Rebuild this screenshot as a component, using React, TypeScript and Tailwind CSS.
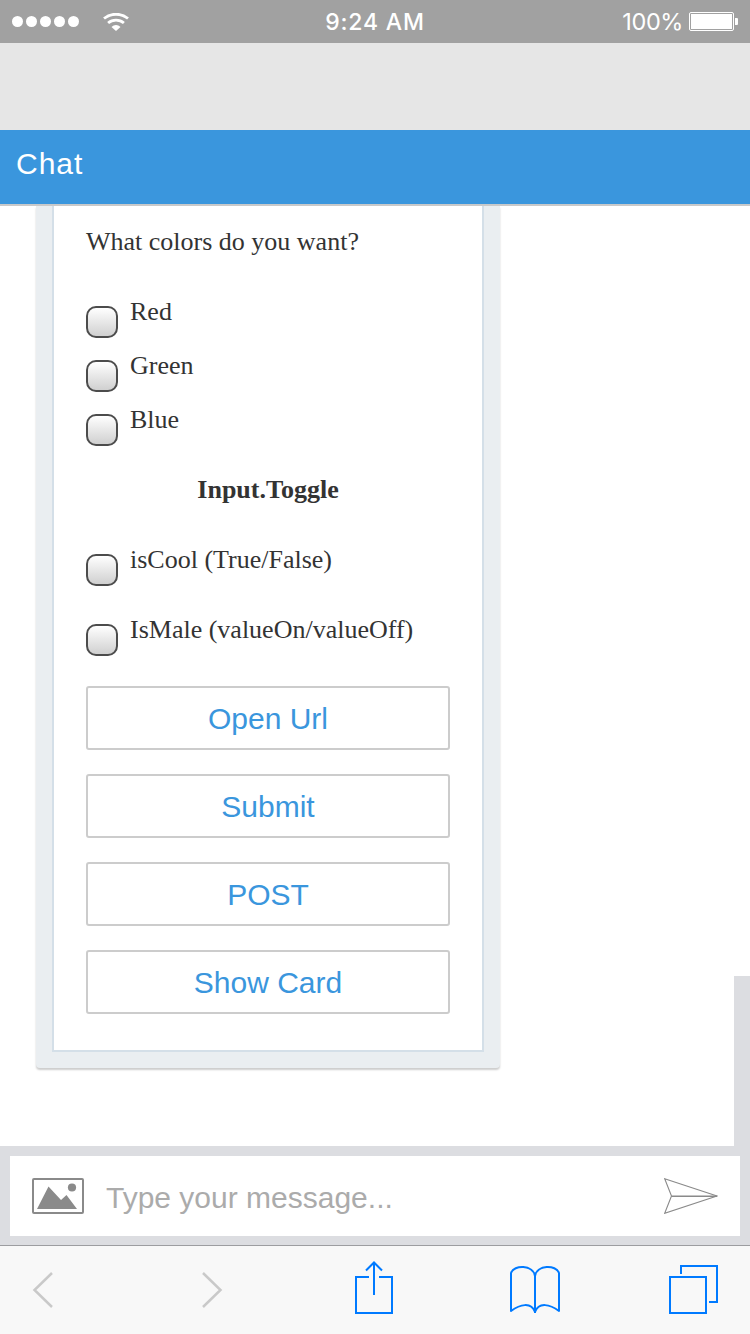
const colors = ["Red", "Green", "Blue"];
const actions = ["Open Url", "Submit", "POST", "Show Card"];

function CheckRow({ label }: { label: string }) {
  return (
    <label className="flex h-[42px] items-start gap-3">
      <span className="mt-[9px] size-8 shrink-0 rounded-[10px] border-2 border-[#4c4c4c] bg-linear-to-b from-white to-[#d0d0d0]" />
      <span className="whitespace-nowrap">{label}</span>
    </label>
  );
}

function StatusBar() {
  return (
    <header className="flex h-[43px] shrink-0 items-center bg-[#a1a1a1] text-white">
      <div className="flex w-[250px] items-center pl-3">
        <div className="flex gap-[3px]">
          {[0, 1, 2, 3, 4].map((i) => (
            <span key={i} className="size-[11px] rounded-full bg-white" />
          ))}
        </div>
        <svg className="ml-6 h-[18px] w-[26px]" viewBox="0 0 26 18" fill="none" stroke="white">
          <path d="M1 5.5C7.7-0.2 18.3-0.2 25 5.500" strokeWidth="2.8" />
          <path d="M5.1 10C9.5 6.1 16.5 6.1 20.9 10" strokeWidth="2.8" />
          <path d="M8.500 14C11 11.2 15 11.2 17.500 14L13 18Z" fill="white" stroke="none" />
        </svg>
      </div>
      <div className="w-[250px] pt-[2px] text-center font-['Inter',sans-serif] text-[23px] font-medium tracking-[0.8px]">9:24 AM</div>
      <div className="flex w-[250px] items-center justify-end pr-3">
        <span className="font-['Inter',sans-serif] text-[23.5px] tracking-[-0.4px]">100%</span>
        <svg className="ml-[6px] h-[19px] w-[49px]" viewBox="0 0 49 19">
          <rect x="0.5" y="0.5" width="44" height="18" rx="1.5" fill="none" stroke="white" />
          <rect x="2" y="2" width="41" height="15" fill="white" />
          <path d="M46 6h2q1 0 1 1v5q0 1-1 1h-2z" fill="white" />
        </svg>
      </div>
    </header>
  );
}

function Composer() {
  return (
    <div className="h-[99px] shrink-0 bg-[#dcdde1] px-[10px] pt-[10px]">
      <div className="flex h-20 items-center bg-white pr-[22px] pl-[22px]">
        <svg className="h-9 w-[52px]" viewBox="0 0 52 36">
          <rect x="1" y="1" width="50" height="34" rx="1" fill="none" stroke="#8a8a8a" strokeWidth="2" />
          <path d="M5 31L16.5 8.5L29 22L34.5 17L45 31Z" fill="#8a8a8a" />
          <circle cx="40" cy="9.5" r="4.1" fill="#8a8a8a" />
        </svg>
        <span className="ml-[22px] pt-[3px] text-[30px] text-[#ababab]">Type your message...</span>
        <svg className="ml-auto h-9 w-[54px]" viewBox="0 0 54 36" fill="none" stroke="#8a8a8a" strokeWidth="1.1">
          <path d="M0.7 0.7L53 18L0.7 35.3L7.5 18Z" />
          <path d="M7.5 18.2H53" strokeWidth="1.5" />
        </svg>
      </div>
    </div>
  );
}

function BrowserBar() {
  return (
    <nav className="h-[89px] shrink-0 border-t border-[#9c9da0] bg-[#f8f8f8]">
      <svg className="block h-[88px] w-[750px]" viewBox="0 1246 750 88" fill="none" stroke="#007aff" strokeWidth="2">
        <path d="M52 1273L34.5 1290L52 1307" stroke="#c9c9c9" strokeWidth="2.5" />
        <path d="M203 1273L220.500 1290L203 1307" stroke="#c9c9c9" strokeWidth="2.5" />
        <path d="M369 1277H356V1313H392V1277H379M374 1295V1263M366 1270.500L374 1262.500L382 1270.500" />
        <path d="M535 1313V1276C533 1264.500 514 1264.500 511 1273V1311C520 1304.500 531 1301.500 535 1312C539 1301.500 550 1304.500 559 1311V1273C556 1264.500 537 1264.500 535 1276" strokeLinejoin="round" />
        <path d="M670 1277H706V1313H670ZM681 1274V1266H717V1302H709" />
      </svg>
    </nav>
  );
}

export default function App() {
  return (
    <div className="flex h-[1334px] w-[750px] flex-col overflow-hidden bg-white font-['Liberation_Sans',sans-serif]">
      <StatusBar />
      <div className="h-[87px] shrink-0 bg-[#e6e6e6]" />
      <div className="h-[76px] shrink-0 border-b-2 border-[#c8c9ca] bg-[#3a96dd] pt-[13px] pl-4 text-[30px] leading-[42px] tracking-[1px] text-white">
        Chat
      </div>
      <main className="flex h-[940px] shrink-0 items-start justify-between pl-9">
        <section className="h-[862px] w-[464px] rounded-b-[4px] bg-[#eaeef1] px-4 shadow-[0_2px_2px_rgba(0,0,0,0.2)]">
          <div className="h-[846px] border-2 border-t-0 border-[#d4dfe8] bg-white px-8 pt-[21px] font-['Liberation_Serif',serif] text-[26px] leading-[30px] text-[#333]">
            <p className="whitespace-nowrap">What colors do you want?</p>
            <div className="mt-10 flex flex-col gap-3">
              {colors.map((color) => (
                <CheckRow key={color} label={color} />
              ))}
            </div>
            <h2 className="mt-7 mb-10 text-center font-bold">Input.Toggle</h2>
            <div className="flex flex-col gap-7">
              <CheckRow label="isCool (True/False)" />
              <CheckRow label="IsMale (valueOn/valueOff)" />
            </div>
            <div className="mt-[29px] flex flex-col gap-6 font-['Liberation_Sans',sans-serif] text-[30px]">
              {actions.map((label) => (
                <button
                  key={label}
                  className="h-16 rounded-[3px] border-2 border-[#ccc] pt-px text-[#3a96dd]"
                >
                  {label}
                </button>
              ))}
            </div>
          </div>
        </section>
        <div className="h-[170px] w-4 self-end bg-[#dcdde1]" />
      </main>
      <Composer />
      <BrowserBar />
    </div>
  );
}
